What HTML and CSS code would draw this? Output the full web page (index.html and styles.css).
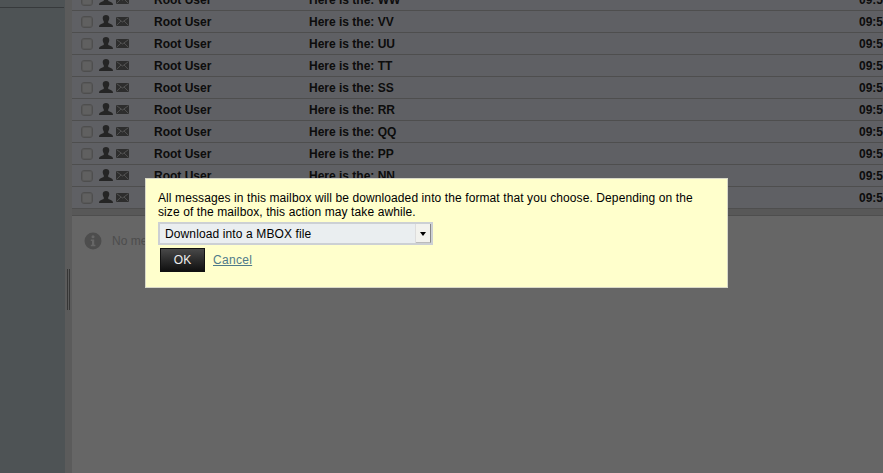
FILE: index.html
```html
<!DOCTYPE html>
<html lang="en">
<head>
<meta charset="utf-8">
<title>Mailbox</title>
<link rel="stylesheet" href="styles.css">
</head>
<body>
<svg class="sprites" width="0" height="0" aria-hidden="true">
  <symbol id="person" viewBox="0 0 14 12"><path d="M7 0C9 0 10.300 1.200 10.300 3.100C10.300 4.700 9.700 5.800 9.200 6.400V7.500C9.200 8.100 10.300 8.400 11.700 8.900C13.200 9.400 14 10.200 14 12H0C0 10.200 .8 9.400 2.300 8.900C3.700 8.400 4.800 8.100 4.800 7.500V6.400C4.300 5.800 3.700 4.700 3.700 3.100C3.700 1.200 5 0 7 0Z"/></symbol>
  <symbol id="env" viewBox="0 0 13 9"><rect width="13" height="9"/><path d="M.5.6 6.500 5 12.500.6M.5 8.400 5 4M12.500 8.400 8 4" fill="none" stroke="#fff" stroke-opacity=".7" stroke-width=".9"/></symbol>
</svg>
<div class="app">
  <aside class="sidebar"><div class="sidebar-top"></div></aside>
  <div class="splitter"><div class="grip"></div></div>
  <main class="main">
    <div class="list">
      <div class="row"><span class="check"></span><svg class="person"><use href="#person"/></svg><svg class="env"><use href="#env"/></svg><span class="from">Root User</span><span class="subject">Here is the: WW</span><span class="time">09:55</span></div>
      <div class="row"><span class="check"></span><svg class="person"><use href="#person"/></svg><svg class="env"><use href="#env"/></svg><span class="from">Root User</span><span class="subject">Here is the: VV</span><span class="time">09:55</span></div>
      <div class="row"><span class="check"></span><svg class="person"><use href="#person"/></svg><svg class="env"><use href="#env"/></svg><span class="from">Root User</span><span class="subject">Here is the: UU</span><span class="time">09:55</span></div>
      <div class="row"><span class="check"></span><svg class="person"><use href="#person"/></svg><svg class="env"><use href="#env"/></svg><span class="from">Root User</span><span class="subject">Here is the: TT</span><span class="time">09:55</span></div>
      <div class="row"><span class="check"></span><svg class="person"><use href="#person"/></svg><svg class="env"><use href="#env"/></svg><span class="from">Root User</span><span class="subject">Here is the: SS</span><span class="time">09:55</span></div>
      <div class="row"><span class="check"></span><svg class="person"><use href="#person"/></svg><svg class="env"><use href="#env"/></svg><span class="from">Root User</span><span class="subject">Here is the: RR</span><span class="time">09:55</span></div>
      <div class="row"><span class="check"></span><svg class="person"><use href="#person"/></svg><svg class="env"><use href="#env"/></svg><span class="from">Root User</span><span class="subject">Here is the: QQ</span><span class="time">09:55</span></div>
      <div class="row"><span class="check"></span><svg class="person"><use href="#person"/></svg><svg class="env"><use href="#env"/></svg><span class="from">Root User</span><span class="subject">Here is the: PP</span><span class="time">09:55</span></div>
      <div class="row"><span class="check"></span><svg class="person"><use href="#person"/></svg><svg class="env"><use href="#env"/></svg><span class="from">Root User</span><span class="subject">Here is the: NN</span><span class="time">09:55</span></div>
      <div class="row"><span class="check"></span><svg class="person"><use href="#person"/></svg><svg class="env"><use href="#env"/></svg><span class="from">Root User</span><span class="subject">Here is the: MM</span><span class="time">09:55</span></div>
    </div>
    <div class="sash"></div>
    <div class="preview">
      <svg class="info" viewBox="0 0 18 18"><circle cx="9" cy="9" r="8.500"/><circle cx="9" cy="4.800" r="1.500" fill="#fff"/><path d="M6.800 7.500h3.400v5.300h1.200v1.400H6.800v-1.400H8V8.900H6.800z" fill="#fff"/></svg>
      <span class="no-msg">No message selected</span>
    </div>
  </main>
</div>
<div class="overlay"></div>
<div class="dialog">
  <p class="dialog-text">All messages in this mailbox will be downloaded into the format that you choose. Depending on the size of the mailbox, this action may take awhile.</p>
  <div class="select"><span class="select-label">Download into a MBOX file</span><span class="select-btn"></span></div>
  <div class="actions"><button class="ok" type="button">OK</button><a class="cancel" href="#">Cancel</a></div>
</div>
</body>
</html>
```
FILE: styles.css
```css
* { box-sizing: border-box; }
html, body { margin: 0; height: 100%; overflow: hidden; }
body { font-family: "Liberation Sans", Arial, sans-serif; font-size: 12px; color: #000; background: #fff; }
.sprites { position: absolute; }
.app { display: flex; height: 473px; }
.sidebar { width: 65px; flex: none; background: #c3cfd4; }
.sidebar-top { height: 8px; margin-right: 1px; border-bottom: 1px solid #8a9296; }
.splitter { width: 7px; flex: none; background: #e4e4e4; display: flex; flex-direction: column; align-items: center; padding-top: 269px; }
.grip { width: 3px; height: 41px; border-left: 1px solid #888; border-right: 1px solid #888; }
.main { flex: 1; min-width: 0; display: flex; flex-direction: column; background: #fff; }
.list { height: 209px; flex: none; display: flex; flex-direction: column; justify-content: flex-end; overflow: hidden; background: #eef0f9; }
.row { height: 22px; flex: none; display: flex; align-items: center; border-bottom: 1px solid #c4c4c4; font-weight: bold; padding-left: 9px; white-space: nowrap; color: #222; }
.check { width: 12px; height: 12px; flex: none; border: 1px solid #c4c4c4; border-radius: 3px; background: #f0f0f0; box-shadow: inset 0 0 0 1px #dcdcdc; }
.person { width: 14px; height: 12px; margin: -1px 0 0 6px; flex: none; fill: #5e5e5e; }
.env { width: 13px; height: 9px; margin-left: 3px; flex: none; fill: #707070; }
.from { margin-left: 25px; width: 155px; flex: none; }
.subject { width: 550px; flex: none; }
.time { flex: none; }
.sash { height: 7px; flex: none; background: #dcdcdc; border-bottom: 1px solid #c4c4c4; }
.preview { flex: 1; display: flex; align-items: flex-start; padding: 16px 0 0 12px; color: #c0c0c0; }
.info { width: 18px; height: 18px; flex: none; fill: #c0c0c0; }
.no-msg { margin: 2px 0 0 10px; }
.overlay { position: absolute; inset: 0; background: rgba(0, 0, 0, .6); }
.dialog { position: absolute; left: 145px; top: 178px; width: 583px; height: 110px; background: #ffc; border: 1px solid #d8d8c8; padding: 12px 12px 0; color: #000; }
.dialog-text { margin: 0; line-height: 14px; width: 545px; letter-spacing: .1px; }
.select { width: 275px; height: 23px; margin-top: 3px; display: flex; align-items: center; justify-content: space-between; background: #eaeef0; border: 2px solid #ccd0d4; padding: 0 0 0 5px; }
.select-label { letter-spacing: .12px; }
.select-btn { width: 15px; height: 19px; position: relative; background: #f2f2ee; border-right: 1px solid #888; border-bottom: 1px solid #bbb; box-shadow: -1px 0 0 #ddd; }
.select-btn::after { content: ""; position: absolute; left: 4px; top: 8px; border: 3px solid transparent; border-top: 4px solid #000; border-bottom: 0; }
.actions { display: flex; align-items: center; margin-top: 3px; padding-left: 2px; }
.ok { width: 45px; height: 24px; padding: 0; border: 1px solid #111; background: linear-gradient(#484848, #101010); color: #eee; font: 12px "Liberation Sans", Arial, sans-serif; }
.cancel { margin-left: 8px; color: #4f7a8a; text-decoration: underline; letter-spacing: .3px; }
```
